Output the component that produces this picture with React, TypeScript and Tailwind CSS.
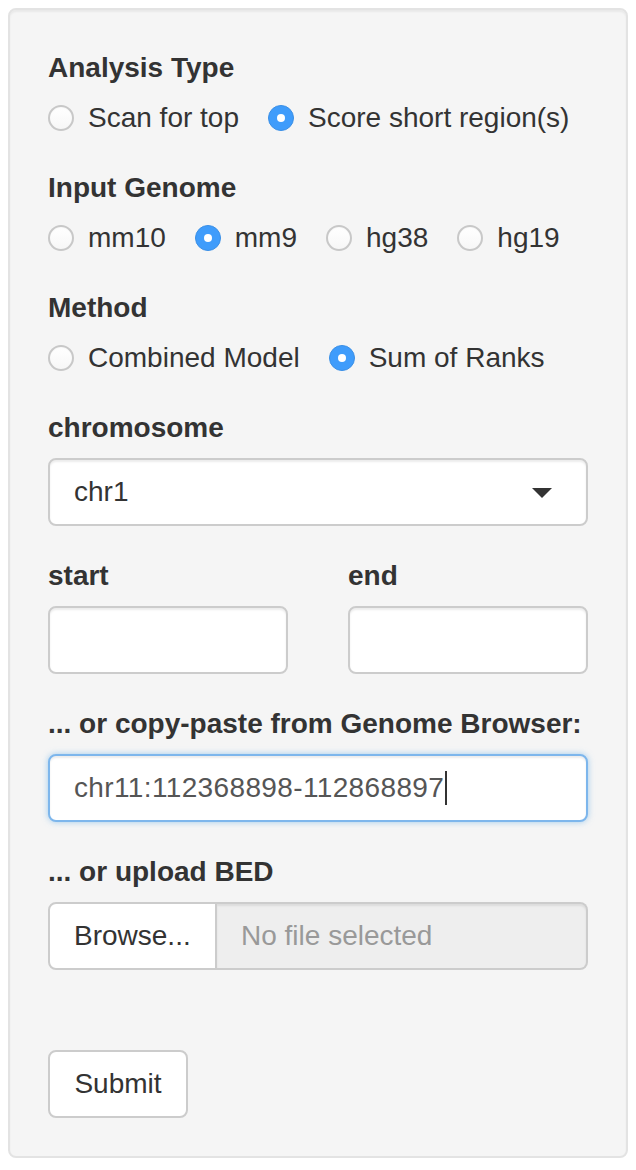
import React from 'react';

// Shiny sidebar (Bootstrap 3 well) rendered at 2x

type Opt = { label: string; checked?: boolean };

function Radio({ label, checked }: Opt) {
  return (
    <label className="inline-flex items-center h-[40px] gap-[14px] cursor-pointer">
      {checked ? (
        <span className="w-[26px] h-[26px] rounded-full bg-[#3f9cfb] border border-[#3a8fe6] flex items-center justify-center">
          <span className="w-[8px] h-[8px] rounded-full bg-white" />
        </span>
      ) : (
        <span className="w-[26px] h-[26px] rounded-full bg-gradient-to-b from-white to-[#f7f7f7] border-2 border-[#c8c8c8] shadow-[inset_0_1px_1px_rgba(0,0,0,0.03)]" />
      )}
      <span>{label}</span>
    </label>
  );
}

function RadioGroup({ title, options }: { title: string; options: Opt[] }) {
  return (
    <div className="mb-[30px]">
      <div className="font-bold leading-[40px] mb-[10px]">{title}</div>
      <div className="flex items-center gap-[29px]">
        {options.map((o) => (
          <Radio key={o.label} {...o} />
        ))}
      </div>
    </div>
  );
}

function Label({ children }: { children: React.ReactNode }) {
  return <div className="font-bold leading-[40px] mb-[10px]">{children}</div>;
}

export default function App() {
  return (
    <div className="p-[8px] bg-white min-h-[1170px] font-['Liberation_Sans',Arial,sans-serif] text-[28px] text-[#333]">
      <div className="w-[620px] bg-[#f5f5f5] border-2 border-[#e3e3e3] rounded-[8px] p-[38px] shadow-[inset_0_2px_2px_rgba(0,0,0,0.05)]">
        <RadioGroup
          title="Analysis Type"
          options={[{ label: 'Scan for top' }, { label: 'Score short region(s)', checked: true }]}
        />
        <RadioGroup
          title="Input Genome"
          options={[{ label: 'mm10' }, { label: 'mm9', checked: true }, { label: 'hg38' }, { label: 'hg19' }]}
        />
        <RadioGroup
          title="Method"
          options={[{ label: 'Combined Model' }, { label: 'Sum of Ranks', checked: true }]}
        />

        {/* chromosome select */}
        <div className="mb-[30px]">
          <Label>chromosome</Label>
          <div className="relative h-[68px] bg-white border-2 border-[#cccccc] rounded-[8px] flex items-center pl-[24px] shadow-[inset_0_2px_2px_rgba(0,0,0,0.075)]">
            <span>chr1</span>
            <span className="absolute left-[482px] top-[28px] w-0 h-0 border-l-[10px] border-r-[10px] border-t-[10px] border-l-transparent border-r-transparent border-t-[#333]" />
          </div>
        </div>

        {/* start / end */}
        <div className="grid grid-cols-2 gap-[60px] mb-[30px]">
          <div>
            <Label>start</Label>
            <div className="h-[68px] bg-white border-2 border-[#cccccc] rounded-[8px] shadow-[inset_0_2px_2px_rgba(0,0,0,0.075)]" />
          </div>
          <div>
            <Label>end</Label>
            <div className="h-[68px] bg-white border-2 border-[#cccccc] rounded-[8px] shadow-[inset_0_2px_2px_rgba(0,0,0,0.075)]" />
          </div>
        </div>

        {/* genome browser paste */}
        <div className="mb-[30px]">
          <Label>... or copy-paste from Genome Browser:</Label>
          <div className="h-[68px] bg-white border-2 border-[#7db6ec] rounded-[8px] flex items-center pl-[24px] text-[#555] shadow-[inset_0_2px_2px_rgba(0,0,0,0.075),0_0_6px_rgba(102,175,233,0.6)]">
            <span className="tracking-[0.36px]">chr11:112368898-112868897</span>
            <span className="w-[2px] h-[34px] bg-[#333] ml-[1px]" />
          </div>
        </div>

        {/* file upload */}
        <div>
          <Label>... or upload BED</Label>
          <div className="flex h-[68px]">
            <div className="w-[169px] bg-white border-2 border-[#cccccc] rounded-l-[8px] flex items-center pl-[24px]">
              Browse...
            </div>
            <div className="flex-1 bg-[#eeeeee] border-2 border-l-0 border-[#cccccc] rounded-r-[8px] flex items-center pl-[24px] text-[#999] shadow-[inset_0_2px_2px_rgba(0,0,0,0.075)]">
              No file selected
            </div>
          </div>
        </div>

        <div className="mt-[80px]">
          <button className="w-[140px] h-[68px] bg-white border-2 border-[#cccccc] rounded-[8px] text-[28px] text-[#333] flex items-center justify-center">
            Submit
          </button>
        </div>
      </div>
    </div>
  );
}
